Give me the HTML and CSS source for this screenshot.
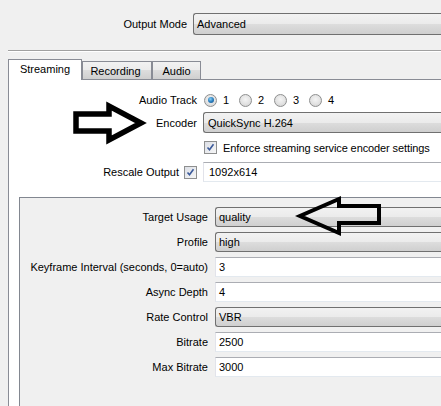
FILE: index.html
```html
<!DOCTYPE html>
<html>
<head>
<meta charset="utf-8">
<link rel="stylesheet" href="styles.css">
</head>
<body>
<div class="page">
  <div class="top-row">
    <span class="label top-label">Output Mode</span>
    <div class="combo">Advanced</div>
  </div>
  <div class="separator"></div>

  <div class="tabbar">
    <div class="tab active">Streaming</div>
    <div class="tab t-rec">Recording</div>
    <div class="tab t-audio">Audio</div>
  </div>

  <div class="panel">
    <div class="row r-audio">
      <span class="label">Audio Track</span>
      <div class="radios">
        <span class="radio checked"></span><span class="rlabel">1</span>
        <span class="radio"></span><span class="rlabel">2</span>
        <span class="radio"></span><span class="rlabel">3</span>
        <span class="radio"></span><span class="rlabel">4</span>
      </div>
    </div>
    <div class="row r-enc">
      <span class="label">Encoder</span>
      <div class="combo">QuickSync H.264</div>
    </div>
    <div class="row r-enforce">
      <span class="label"></span>
      <div class="checkline">
        <span class="check"><svg width="11" height="11" viewBox="0 0 11 11"><path d="M2.5 5.5 L4.5 7.8 L8.5 2.2" fill="none" stroke="#3b5a9a" stroke-width="1.6"/></svg></span>
        <span class="enforce-text">Enforce streaming service encoder settings</span>
      </div>
    </div>
    <div class="row r-rescale">
      <span class="label label-check">Rescale Output <span class="check"><svg width="11" height="11" viewBox="0 0 11 11"><path d="M2.5 5.5 L4.5 7.8 L8.5 2.2" fill="none" stroke="#3b5a9a" stroke-width="1.6"/></svg></span></span>
      <div class="edit">1092x614</div>
    </div>

    <div class="group">
      <div class="grow">
        <span class="glabel">Target Usage</span>
        <div class="combo">quality</div>
      </div>
      <div class="grow">
        <span class="glabel">Profile</span>
        <div class="combo">high</div>
      </div>
      <div class="grow">
        <span class="glabel">Keyframe Interval (seconds, 0=auto)</span>
        <div class="edit">3</div>
      </div>
      <div class="grow">
        <span class="glabel">Async Depth</span>
        <div class="edit">4</div>
      </div>
      <div class="grow">
        <span class="glabel">Rate Control</span>
        <div class="combo">VBR</div>
      </div>
      <div class="grow">
        <span class="glabel">Bitrate</span>
        <div class="edit">2500</div>
      </div>
      <div class="grow">
        <span class="glabel">Max Bitrate</span>
        <div class="edit">3000</div>
      </div>
    </div>
  </div>

  <svg class="arrows" width="441" height="406" viewBox="0 0 441 406">
    <polygon points="76,114 109,114 109,106 141,123 109,140 109,131 76,131" fill="none" stroke="#000" stroke-width="5.5" stroke-linejoin="miter"/>
    <polygon points="379,206 339,206 339,199 300,216 339,233 339,223 379,223" fill="none" stroke="#000" stroke-width="4" stroke-linejoin="miter"/>
  </svg>
</div>
</body>
</html>
```

FILE: styles.css
```css
html, body {
  margin: 0;
  padding: 0;
  background: #f0f0f0;
  overflow: hidden;
}
body {
  font-family: "Liberation Sans", Arial, sans-serif;
  font-size: 11px;
  color: #000;
}
.page {
  position: relative;
  width: 441px;
  height: 406px;
  overflow: hidden;
}
.top-row {
  display: flex;
  align-items: center;
  padding-top: 13px;
  height: 22px;
}
.top-label {
  width: 187px;
  text-align: right;
  margin-right: 6px;
}
.label {
  flex: none;
  text-align: right;
}
.combo {
  flex: 1;
  min-width: 0;
  box-sizing: border-box;
  height: 22px;
  border: 1px solid #707070;
  border-right: none;
  border-radius: 3px 0 0 3px;
  background: linear-gradient(#f2f2f2 0%, #ebebeb 50%, #dddddd 50%, #cfcfcf 100%);
  padding-left: 3px;
  display: flex;
  align-items: center;
}
.edit {
  flex: 1;
  min-width: 0;
  box-sizing: border-box;
  height: 20px;
  background: #fff;
  border: 1px solid #e2e3ea;
  border-right: none;
  border-top-color: #abadb3;
  border-bottom-color: #e3e9ef;
  padding-left: 4px;
  display: flex;
  align-items: center;
}
.separator {
  margin: 15px 0 0 8px;
  height: 1px;
  background: #a0a0a0;
  border-bottom: 1px solid #ffffff;
}
.tabbar {
  display: flex;
  align-items: flex-end;
  margin: 7px 0 0 8px;
  height: 20px;
  position: relative;
  z-index: 2;
}
.tab {
  box-sizing: border-box;
  border: 1px solid #898c95;
  border-bottom: none;
  display: flex;
  align-items: center;
  justify-content: center;
  height: 18px;
  background: linear-gradient(#f2f2f2 0%, #ebebeb 50%, #dddddd 50%, #cfcfcf 100%);
}
.tab.active {
  width: 74px;
  height: 21px;
  margin-bottom: -1px;
  background: #fff;
  padding-bottom: 2px;
}
.t-rec {
  width: 70px;
  padding-right: 3px;
}
.t-audio {
  width: 49px;
}
.panel {
  margin-left: 8px;
  border-left: 1px solid #898c95;
  border-top: 1px solid #898c95;
  background: #fff;
  height: 400px;
  padding-top: 10px;
  box-sizing: border-box;
}
.row {
  display: flex;
  align-items: center;
  height: 20px;
}
.row .label {
  width: 188px;
  margin-right: 6px;
}
.r-enc {
  margin-top: 2px;
  height: 21px;
}
.r-enc .combo {
  height: 21px;
  padding-left: 4px;
}
.r-enforce {
  margin-top: 4px;
  height: 21px;
}
.enforce-text {
  letter-spacing: -0.1px;
}
.r-rescale {
  margin-top: 4px;
}
.r-rescale .edit {
  padding-left: 5px;
}
.label-check {
  display: flex;
  align-items: center;
  justify-content: flex-end;
  gap: 5px;
}
.radios {
  display: flex;
  align-items: center;
  margin-left: 1px;
}
.radio {
  box-sizing: border-box;
  width: 13px;
  height: 13px;
  border-radius: 50%;
  border: 1px solid #8e8f8f;
  background: radial-gradient(circle at 50% 40%, #f4f4f4 0%, #e2e2e2 55%, #cdcdcd 100%);
  position: relative;
}
.radio.checked::after {
  content: "";
  position: absolute;
  left: 2.5px;
  top: 2.5px;
  width: 6px;
  height: 6px;
  border-radius: 50%;
  background: radial-gradient(circle at 40% 35%, #8ad0f5 0%, #2a7fc0 50%, #1b4f80 100%);
}
.rlabel {
  margin: 0 10px 0 6px;
  width: 6px;
}
.checkline {
  display: flex;
  align-items: center;
  gap: 6px;
  margin-left: 1px;
}
.check {
  box-sizing: border-box;
  width: 13px;
  height: 13px;
  border: 1px solid #8e8f8f;
  background: linear-gradient(135deg, #dcdfe6 0%, #f6f6f6 100%);
  display: flex;
  align-items: center;
  justify-content: center;
}
.check svg {
  display: block;
}
.group {
  margin: 15px 0 0 10px;
  border-left: 1px solid #828790;
  border-top: 1px solid #828790;
  background: #f0f0f0;
  height: 260px;
  padding-top: 9px;
  display: flex;
  flex-direction: column;
  gap: 5px;
}
.grow {
  display: flex;
  align-items: center;
  height: 20px;
}
.glabel {
  width: 188px;
  margin-right: 7px;
  text-align: right;
  flex: none;
  white-space: nowrap;
}
.grow .combo {
  height: 20px;
}
.grow .edit {
  padding-left: 3px;
}
.arrows {
  position: absolute;
  left: 0;
  top: 0;
  pointer-events: none;
  z-index: 5;
}
```
